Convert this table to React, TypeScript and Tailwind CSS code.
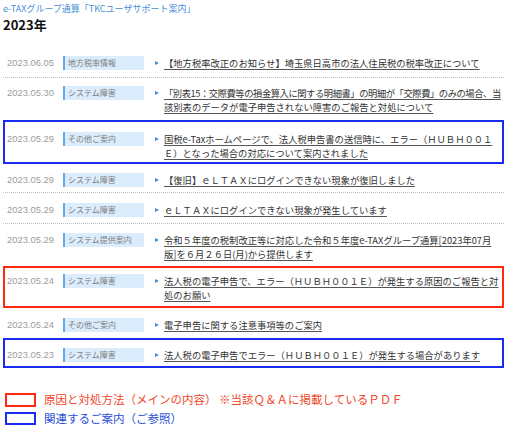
import type { FC } from 'react';

type Row = {
  date: string;
  tag: string;
  lines: Array<string>;
  pad: string;
  sep?: boolean;
  box?: 'red' | 'blue';
  tight?: number;
};

const rows: Array<Row> = [
  {
    date: '2023.06.05',
    tag: '地方税率情報',
    lines: ['【地方税率改正のお知らせ】埼玉県日高市の法人住民税の税率改正について'],
    pad: 'pt-[8px] pb-[7px]',
    sep: true,
  },
  {
    date: '2023.05.30',
    tag: 'システム障害',
    lines: [
      '「別表15：交際費等の損金算入に関する明細書」の明細が「交際費」のみの場合、当',
      '該別表のデータが電子申告されない障害のご報告と対処について',
    ],
    pad: 'pt-[8px] pb-[6px]',
    tight: 0,
  },
  {
    date: '2023.05.29',
    tag: 'その他ご案内',
    lines: [
      '国税e-Taxホームページで、法人税申告書の送信時に、エラー（ＨＵＢＨ００１',
      'Ｅ）となった場合の対応について案内されました',
    ],
    pad: 'pt-[10px] pb-[2px]',
    box: 'blue',
  },
  {
    date: '2023.05.29',
    tag: 'システム障害',
    lines: ['【復旧】ｅＬＴＡＸにログインできない現象が復旧しました'],
    pad: 'pt-[9px] pb-[5px]',
    sep: true,
  },
  {
    date: '2023.05.29',
    tag: 'システム障害',
    lines: ['ｅＬＴＡＸにログインできない現象が発生しています'],
    pad: 'pt-[10px] pb-[6px]',
    sep: true,
  },
  {
    date: '2023.05.29',
    tag: 'システム提供案内',
    lines: [
      '令和５年度の税制改正等に対応した令和５年度e-TAXグループ通算[2023年07月',
      '版]を６月２６日(月)から提供します',
    ],
    pad: 'pt-[9px] pb-[5px]',
  },
  {
    date: '2023.05.24',
    tag: 'システム障害',
    lines: [
      '法人税の電子申告で、エラー（ＨＵＢＨ００１Ｅ）が発生する原因のご報告と対',
      '処のお願い',
    ],
    pad: 'pt-[6px] pb-[4px]',
    box: 'red',
  },
  {
    date: '2023.05.24',
    tag: 'その他ご案内',
    lines: ['電子申告に関する注意事項等のご案内'],
    pad: 'pt-[10px] pb-[6px]',
  },
  {
    date: '2023.05.23',
    tag: 'システム障害',
    lines: ['法人税の電子申告でエラー（ＨＵＢＨ００１Ｅ）が発生する場合があります'],
    pad: 'pt-[8px] pb-[4px]',
    box: 'blue',
  },
];

const jp = "font-['Noto_Sans_CJK_JP',sans-serif]";

const NewsRow: FC<{ row: Row }> = ({ row }) => {
  const frame =
    row.box === 'red'
      ? 'border-2 border-[#ff2a10] pl-[2px]'
      : row.box === 'blue'
        ? 'border-2 border-[#1a2cf2] pl-[2px]'
        : row.sep
          ? 'border-b border-dotted border-[#bdbdbd] pl-[4px]'
          : 'pl-[4px]';

  return (
    <li className={`flex items-start ${frame} ${row.pad}`}>
      <span className="w-[56px] shrink-0 font-['Liberation_Sans',sans-serif] text-[9.4px] leading-[14px] text-[#9c9c9c]">
        {row.date}
      </span>
      <span
        className={`h-[14px] w-[81px] shrink-0 border-l-2 border-[#64aae8] bg-[#dbecfc] pl-[3px] ${jp} text-[8px] leading-[14px] text-[#7d7d7d]`}
      >
        {row.tag}
      </span>
      <span className="ml-[11px] mt-[5px] mr-[5px] h-0 w-0 shrink-0 border-y-[2.5px] border-l-[4px] border-y-transparent border-l-[#3c8fd8]" />
      <a
        href="#"
        className={`${jp} whitespace-nowrap text-[9.3px] leading-[14px] text-[#333] underline decoration-[#555] underline-offset-[2px]`}
      >
        {row.lines.map((line, i) => (
          <span key={i} className={i === row.tight ? 'block tracking-[-0.45px]' : 'block'}>
            {line}
          </span>
        ))}
      </a>
    </li>
  );
};

export default function App() {
  return (
    <div className="h-[431px] w-[509px] overflow-hidden bg-white pt-[2px]">
      <p className={`pl-[3px] ${jp} text-[9px] leading-[14px] text-[#4a8fd8]`}>
        e-TAXグループ通算「TKCユーザサポート案内」
      </p>
      <h2 className={`pl-[3px] ${jp} text-[13px] font-bold leading-[18px] text-[#111]`}>2023年</h2>

      <ul className="ml-[3px] mt-[14px] w-[501px]">
        {rows.map(row => (
          <NewsRow key={row.date + row.lines[0]} row={row} />
        ))}
      </ul>

      <div className={`ml-[5px] mt-[24px] flex flex-col gap-[4px] ${jp} text-[11.5px] leading-[15px]`}>
        <div className="flex items-center gap-[8px] text-[#f0482a]">
          <span className="h-[14px] w-[31px] border-2 border-[#ff2a10]" />
          原因と対処方法（メインの内容） ※当該Ｑ＆Ａに掲載しているＰＤＦ
        </div>
        <div className="flex items-center gap-[8px] text-[#2a4fd6]">
          <span className="h-[13px] w-[31px] border-2 border-[#1a2cf2]" />
          関連するご案内（ご参照）
        </div>
      </div>
    </div>
  );
}
